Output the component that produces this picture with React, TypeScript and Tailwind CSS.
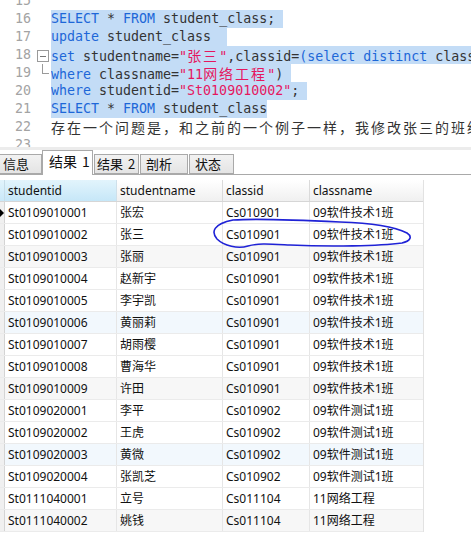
import React from 'react';

const KW = 'text-[#1d67d8]';
const STR = 'text-[#e5175f]';

function Cjk({ children, className = '' }: { children: React.ReactNode; className?: string }) {
  return (
    <span className={`text-[14px] tracking-[2px] ${className}`} style={{ fontFamily: '"Noto Sans CJK SC", sans-serif' }}>
      {children}
    </span>
  );
}

type Line = { n: number; sel?: string; content?: React.ReactNode };

const lines: Line[] = [
  { n: 15 },
  {
    n: 16,
    sel: 'w-[232px]',
    content: (
      <>
        <span className={KW}>SELECT</span> * <span className={KW}>FROM</span> student_class;
      </>
    ),
  },
  {
    n: 17,
    sel: 'w-[176px]',
    content: (
      <>
        <span className={KW}>update</span> student_class
      </>
    ),
  },
  {
    n: 18,
    sel: 'w-[440px]',
    content: (
      <>
        <span className={KW}>set</span> studentname=<span className={STR}>"<Cjk>张三</Cjk>"</span>,classid=
        <span className={KW}>(select distinct</span> classid <span className={KW}>from</span> class
      </>
    ),
  },
  {
    n: 19,
    sel: 'w-[240px]',
    content: (
      <>
        <span className={KW}>where</span> classname=<span className={STR}>"11<Cjk>网络工程</Cjk>"</span>)
      </>
    ),
  },
  {
    n: 20,
    sel: 'w-[256px]',
    content: (
      <>
        <span className={KW}>where</span> studentid=<span className={STR}>"St0109010002"</span>;
      </>
    ),
  },
  {
    n: 21,
    sel: 'w-[216px]',
    content: (
      <>
        <span className={KW}>SELECT</span> * <span className={KW}>FROM</span> student_class
      </>
    ),
  },
  {
    n: 22,
    content: <Cjk className="text-[#333]">存在一个问题是，和之前的一个例子一样，我修改张三的班级</Cjk>,
  },
  { n: 23 },
];

const rows: [string, string, string, string][] = [
  ['St0109010001', '张宏', 'Cs010901', '09软件技术1班'],
  ['St0109010002', '张三', 'Cs010901', '09软件技术1班'],
  ['St0109010003', '张丽', 'Cs010901', '09软件技术1班'],
  ['St0109010004', '赵新宇', 'Cs010901', '09软件技术1班'],
  ['St0109010005', '李宇凯', 'Cs010901', '09软件技术1班'],
  ['St0109010006', '黄丽莉', 'Cs010901', '09软件技术1班'],
  ['St0109010007', '胡雨樱', 'Cs010901', '09软件技术1班'],
  ['St0109010008', '曹海华', 'Cs010901', '09软件技术1班'],
  ['St0109010009', '许田', 'Cs010901', '09软件技术1班'],
  ['St0109020001', '李平', 'Cs010902', '09软件测试1班'],
  ['St0109020002', '王虎', 'Cs010902', '09软件测试1班'],
  ['St0109020003', '黄微', 'Cs010902', '09软件测试1班'],
  ['St0109020004', '张凯芝', 'Cs010902', '09软件测试1班'],
  ['St0111040001', '立号', 'Cs011104', '11网络工程'],
  ['St0111040002', '姚钱', 'Cs011104', '11网络工程'],
];

function rowBg(i: number) {
  if (i % 6 === 5) return 'bg-[#f2f8fd]';
  if (i % 6 === 2) return 'bg-[#f7f7f7]';
  return 'bg-white';
}

function Tab({ label, num, active, className }: { label: string; num?: string; active?: boolean; className: string }) {
  return (
    <div
      className={`flex items-center border-[#a9a9a9] ${
        active
          ? 'h-[25px] bg-white border-l border-r border-t relative -mb-px text-[14px] pb-[3px]'
          : 'h-[20px] bg-gradient-to-b from-[#f2f2f2] to-[#e4e4e4] border text-[13px]'
      } ${className}`}
    >
      {label}
      {num && <span className="ml-[5px]">{num}</span>}
    </div>
  );
}

export default function App() {
  const sans = { fontFamily: '"Noto Sans", "Noto Sans CJK SC", sans-serif' };
  return (
    <div className="relative w-[471px] h-[548px] overflow-hidden bg-white text-[#111]" style={sans}>
      {/* editor */}
      <div
        className="h-[147px] overflow-hidden text-[13.3px] text-[#333]"
        style={{ fontFamily: '"DejaVu Sans Mono", "Noto Sans CJK SC", monospace' }}
      >
        <div className="-mt-[8px]">
          {lines.map((l) => (
            <div key={l.n} className="flex h-[18px] leading-[18px]">
              <div className="w-[31px] shrink-0 text-right text-[#a3a3a3]">{l.n}</div>
              <div className="relative w-[20px] shrink-0">
                {l.n === 18 && (
                  <div className="absolute left-[6px] top-[4px] w-[12px] h-[12px] border border-[#9a9a9a] bg-white flex items-center justify-center">
                    <div className="w-[6px] h-px bg-[#777]" />
                  </div>
                )}
                {l.n === 19 && (
                  <>
                    <div className="absolute left-[11px] top-0 w-px h-[9px] bg-[#9a9a9a]" />
                    <div className="absolute left-[11px] top-[9px] w-[7px] h-px bg-[#9a9a9a]" />
                  </>
                )}
              </div>
              <div className={`whitespace-pre overflow-hidden shrink-0 ${l.sel ? `bg-[#c3dcf6] ${l.sel}` : ''}`}>
                {l.content}
              </div>
            </div>
          ))}
        </div>
      </div>

      {/* tabs */}
      <div className="h-[3px] bg-[#ececec]" />
      <div className="relative flex items-end h-[25px] border-b border-[#a9a9a9]" style={{ fontFamily: '"Noto Sans CJK SC", sans-serif' }}>
        <Tab label="信息" className="w-[42px] pl-[3px] border-l-0" />
        <Tab label="结果" num="1" active className="w-[51px] pl-[6px]" />
        <Tab label="结果" num="2" className="w-[45px] pl-[2px] ml-px" />
        <Tab label="剖析" className="w-[48px] pl-[5px] ml-px" />
        <Tab label="状态" className="w-[45px] pl-[5px] ml-px" />
      </div>

      {/* grid */}
      <div className="mt-[5px] w-[424px] border-r border-[#e2e2e2] text-[12px]">
        <div className="flex h-[22px] items-center border-b border-[#d6d6d6]">
          <div className="w-[5px] h-full bg-gradient-to-b from-[#e2f4fc] to-[#c9e8f8] border-r border-[#c7dde8]" />
          <div className="w-[112px] h-full flex items-center pl-[3px] bg-gradient-to-b from-[#e2f4fc] to-[#c6e7f8] border-r border-[#cfe0ea]">
            studentid
          </div>
          <div className="w-[106px] h-full flex items-center pl-[3px] bg-gradient-to-b from-white to-[#f0f0f0] border-r border-[#dadada]">
            studentname
          </div>
          <div className="w-[87px] h-full flex items-center pl-[3px] bg-gradient-to-b from-white to-[#f0f0f0] border-r border-[#dadada]">
            classid
          </div>
          <div className="w-[113px] h-full flex items-center pl-[3px] bg-gradient-to-b from-white to-[#f0f0f0]">
            classname
          </div>
        </div>
        {rows.map((r, i) => (
          <div key={r[0]} className={`flex h-[22px] items-center border-b border-[#ebebeb] ${rowBg(i)}`}>
            <div className="relative w-[5px] h-full bg-[#f0f0f0] border-r border-[#d4d4d4]">
              {i === 0 && (
                <div className="absolute left-0 top-[7px] w-0 h-0 border-y-[4px] border-y-transparent border-l-[4px] border-l-black" />
              )}
            </div>
            <div className="w-[112px] h-full flex items-center pl-[3px] border-r border-[#e6e6e6]">{r[0]}</div>
            <div className="w-[106px] h-full flex items-center pl-[3px] border-r border-[#e6e6e6]">{r[1]}</div>
            <div className="w-[87px] h-full flex items-center pl-[3px] border-r border-[#e6e6e6]">{r[2]}</div>
            <div className="w-[113px] h-full flex items-center pl-[3px]">{r[3]}</div>
          </div>
        ))}
      </div>

      {/* hand-drawn annotation */}
      <svg className="absolute left-0 top-0 pointer-events-none" width="471" height="548" viewBox="0 0 471 548">
        <path
          d="M233,220 C260,218 300,220 340,222 C370,223 395,227 407,233 C413,237 410,241 402,243 C380,246 330,247 290,245 C270,244 258,243 248,246 C238,249 224,246 217,239 C211,232 213,224 233,220"
          fill="none"
          stroke="#1f22d6"
          strokeWidth="1.6"
          strokeLinecap="round"
        />
      </svg>
    </div>
  );
}
